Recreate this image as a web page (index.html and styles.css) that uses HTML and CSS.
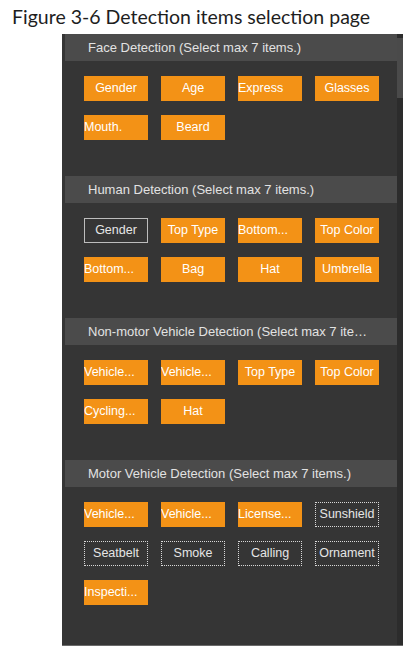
FILE: index.html
```html
<!DOCTYPE html>
<html lang="en">
<head>
    <meta charset="UTF-8">
    <meta name="viewport" content="width=device-width, initial-scale=1.0">
    <title>Detection items selection</title>
    <link rel="stylesheet" href="styles.css">
</head>
<body>
    <p class="caption">Figure 3-6 Detection items selection page</p>

    <div class="panel">
        <div class="panel-body">

            <div class="group">
                <div class="group-title">Face Detection (Select max 7 items.)</div>
                <div class="items">
                    <span class="item">Gender</span>
                    <span class="item">Age</span>
                    <span class="item cut" title="Expression">Express</span>
                    <span class="item">Glasses</span>
                    <span class="item cut" title="Mouth Mask">Mouth.</span>
                    <span class="item">Beard</span>
                </div>
            </div>

            <div class="group">
                <div class="group-title">Human Detection (Select max 7 items.)</div>
                <div class="items">
                    <span class="item off focus">Gender</span>
                    <span class="item">Top Type</span>
                    <span class="item cut" title="Bottom Type">Bottom...</span>
                    <span class="item">Top Color</span>
                    <span class="item cut" title="Bottom Color">Bottom...</span>
                    <span class="item">Bag</span>
                    <span class="item">Hat</span>
                    <span class="item">Umbrella</span>
                </div>
            </div>

            <div class="group">
                <div class="group-title">Non-motor Vehicle Detection (Select max 7 items.)</div>
                <div class="items">
                    <span class="item cut" title="Vehicle Type">Vehicle...</span>
                    <span class="item cut" title="Vehicle Color">Vehicle...</span>
                    <span class="item">Top Type</span>
                    <span class="item">Top Color</span>
                    <span class="item cut" title="Cycling Number">Cycling...</span>
                    <span class="item">Hat</span>
                </div>
            </div>

            <div class="group">
                <div class="group-title">Motor Vehicle Detection (Select max 7 items.)</div>
                <div class="items">
                    <span class="item cut" title="Vehicle Type">Vehicle...</span>
                    <span class="item cut" title="Vehicle Color">Vehicle...</span>
                    <span class="item cut" title="License Plate">License...</span>
                    <span class="item off">Sunshield</span>
                    <span class="item off">Seatbelt</span>
                    <span class="item off">Smoke</span>
                    <span class="item off">Calling</span>
                    <span class="item off">Ornament</span>
                    <span class="item cut" title="Inspection Sticker">Inspecti...</span>
                </div>
            </div>

        </div>
        <div class="scrollbar"><div class="thumb"></div></div>
    </div>
</body>
</html>
```

FILE: styles.css
```css
body {
    margin: 0;
    background-color: #fff;
    font-family: "Liberation Sans", Arial, sans-serif;
}

.caption {
    margin: 0;
    padding: 5px 0 0 12px;
    height: 29px;
    font-family: Lato, "Open Sans", sans-serif;
    font-size: 19.5px;
    color: #1e1e1e;
}

.panel {
    display: flex;
    margin-left: 62px;
    width: 341px;
    height: 611px;
    background-color: #353535;
    border-bottom: 1px solid #6a6a6a;
}

.panel-body {
    flex: 1;
    min-width: 0;
    padding-left: 3px;
}

.scrollbar {
    width: 6px;
    background-color: #2c2c2c;
}

.thumb {
    margin-top: 4px;
    height: 60px;
    background-color: #4a4a4a;
}

.group {
    margin-bottom: 36px;
}

.group-title {
    height: 27px;
    line-height: 27px;
    padding: 0 26px 0 23px;
    background-color: #4b4b4b;
    color: #e2e2e2;
    font-size: 13px;
    white-space: nowrap;
    overflow: hidden;
    text-overflow: ellipsis;
}

.items {
    display: grid;
    grid-template-columns: repeat(4, 64px);
    column-gap: 13px;
    row-gap: 14px;
    padding: 15px 0 0 19px;
}

.item {
    height: 25px;
    line-height: 25px;
    box-sizing: border-box;
    background-color: #f39216;
    color: #fff;
    font-size: 12.5px;
    text-align: center;
    white-space: nowrap;
    overflow: hidden;
    text-overflow: ellipsis;
}

.item.cut {
    text-align: left;
}

.item.off {
    background-color: transparent;
    border: 1px dotted #d8d8d8;
    line-height: 23px;
    color: #e6e6e6;
}

.item.off.focus {
    border-style: solid;
    border-color: #bdbdbd;
}
```
